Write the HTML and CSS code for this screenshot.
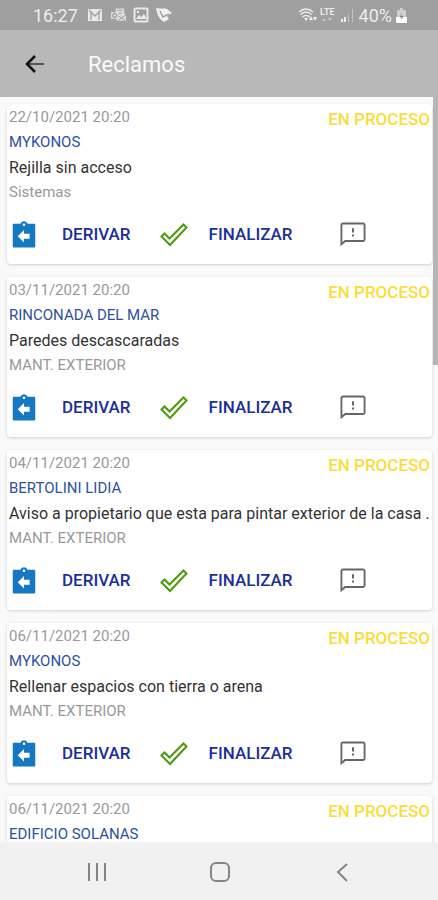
FILE: index.html
```html
<!DOCTYPE html>
<html lang="es">
<head>
<meta charset="utf-8">
<meta name="viewport" content="width=device-width, initial-scale=1">
<title>Reclamos</title>
<link rel="stylesheet" href="styles.css">
</head>
<body>
<svg class="defs" aria-hidden="true">
  <symbol id="i-return" viewBox="0 0 24 24"><path d="M20 3h-5.200C14.400 1.800 13.300 1 12 1s-2.400.800-2.800 2H4c-.600 0-1 .400-1 1v17c0 .600.400 1 1 1h16c.600 0 1-.400 1-1V4c0-.600-.400-1-1-1zm-8-.300c.600 0 1 .400 1 1s-.400 1-1 1-1-.400-1-1 .400-1 1-1zM16.500 15H12v3l-5-5 5-5v3h4.500z"/></symbol>
  <symbol id="i-check" viewBox="0 0 28 24"><path d="M1.500 13.500 4.500 10.500 9.500 15.500 23.500 1.500 26.500 4.500 10 22z" /></symbol>
  <symbol id="i-note" viewBox="0 0 24 24"><path d="M20 2H4c-1.100 0-2 .900-2 2v17l4-3.500h14c1.100 0 2-.900 2-2V4c0-1.100-.900-2-2-2zm.500 14H5.400L3.500 17.700V3.500h17zM11.200 11.500h1.600v1.600h-1.600zm0-5h1.600v3.500h-1.600z"/></symbol>
</svg>

<div class="status">
  <span class="clock">16:27</span>
  <svg class="s-icon" viewBox="0 0 16 16"><path fill="#e9e9e9" d="M1 2h14v12H1z"/><path d="M4 13V5l4 4 4-4v8M2 3l6 6 6-6" fill="none" stroke="#9f9f9f" stroke-width="1.300"/></svg>
  <svg class="s-icon wide" viewBox="0 0 18 16"><path d="M6 1h9v5l2 2v6H7v-2H1V5h5z" fill="#dedede"/><circle cx="5" cy="8.500" r="2" fill="none" stroke="#999" stroke-width="1.300"/><path d="M8 3h5M9 6h4M9 9l3 2 5-3M9 14l3-3 4 3" fill="none" stroke="#999"/></svg>
  <svg class="s-icon" viewBox="0 0 16 16"><rect x="1.500" y="1.500" width="13" height="13" rx="1" fill="none" stroke="#e9e9e9" stroke-width="2"/><path d="m3 12 3-4 2 2 3-3 3 5zM4 4h2v2H4z" fill="#e9e9e9"/></svg>
  <svg class="s-icon last" viewBox="0 0 16 16"><path d="M0 1c4 1 8 0 11 1l5 4-5 3 2 3-5 3C3 12 1 7 0 1z" fill="#f0f0f0"/><path d="m4 4 3 6 6-3" fill="none" stroke="#9f9f9f" stroke-width="1.500"/></svg>
  <svg class="wifi" viewBox="0 0 20 16"><g fill="none" stroke="#efefef" stroke-width="1.500"><path d="M1 5q7-6 14 0M2.500 7.500q5.500-5 11 0M4.500 10q3.500-3 7 0"/></g><path d="m6 11 2 3 2-3zM11 13l2-4 2 4zM15 10h4l-2 4z" fill="#efefef"/></svg>
  <span class="lte">LTE<svg viewBox="0 0 12 5"><path d="m1 4 2-3 2 3zM7 1h4L9 4z" fill="#c8c8c8"/></svg></span>
  <svg class="signal" viewBox="0 0 14 14"><path d="M1 11h2v3H1zM4 9h2v5H4z" fill="#eee"/><path d="M8 6h1v8H8zM12 1h1v13h-1z" fill="#c4c4c4"/></svg>
  <span class="battery-text">40%</span>
  <svg class="battery" viewBox="0 0 11 15"><path d="M4 0h3v2h2q1 0 1 1v10q0 1-1 1H2q-1 0-1-1V3q0-1 1-1h2z" fill="#d0d0d0"/><path d="M0 9h11v5q0 1-1 1H1q-1 0-1-1z" fill="#fff"/><path d="M5.500 5 3.500 9.500h2v2.500l2-4h-2z" fill="#888"/></svg>
</div>

<header class="appbar">
  <button class="back" type="button" aria-label="Volver"><svg viewBox="0 0 20 20"><path d="M2 10h17" stroke="#555" stroke-width="2"/><path d="M10 2 2 10l8 8" fill="none" stroke="#111" stroke-width="2.500"/></svg></button>
  <h1>Reclamos</h1>
</header>

<main class="list">
  <article class="card">
    <div class="top"><time>22/10/2021 20:20</time><strong>EN PROCESO</strong></div>
    <h2>MYKONOS</h2>
    <p class="desc">Rejilla sin acceso</p>
    <p class="area">Sistemas</p>
    <div class="actions">
      <button class="derive" type="button"><svg><use href="#i-return"/></svg>DERIVAR</button>
      <button class="finish" type="button"><svg><use href="#i-check"/></svg>FINALIZAR</button>
      <button class="note" type="button" aria-label="Comentar"><svg><use href="#i-note"/></svg></button>
    </div>
  </article>
  <article class="card">
    <div class="top"><time>03/11/2021 20:20</time><strong>EN PROCESO</strong></div>
    <h2>RINCONADA DEL MAR</h2>
    <p class="desc">Paredes descascaradas</p>
    <p class="area">MANT. EXTERIOR</p>
    <div class="actions">
      <button class="derive" type="button"><svg><use href="#i-return"/></svg>DERIVAR</button>
      <button class="finish" type="button"><svg><use href="#i-check"/></svg>FINALIZAR</button>
      <button class="note" type="button" aria-label="Comentar"><svg><use href="#i-note"/></svg></button>
    </div>
  </article>
  <article class="card">
    <div class="top"><time>04/11/2021 20:20</time><strong>EN PROCESO</strong></div>
    <h2>BERTOLINI LIDIA</h2>
    <p class="desc">Aviso a propietario que esta para pintar exterior de la casa .</p>
    <p class="area">MANT. EXTERIOR</p>
    <div class="actions">
      <button class="derive" type="button"><svg><use href="#i-return"/></svg>DERIVAR</button>
      <button class="finish" type="button"><svg><use href="#i-check"/></svg>FINALIZAR</button>
      <button class="note" type="button" aria-label="Comentar"><svg><use href="#i-note"/></svg></button>
    </div>
  </article>
  <article class="card">
    <div class="top"><time>06/11/2021 20:20</time><strong>EN PROCESO</strong></div>
    <h2>MYKONOS</h2>
    <p class="desc">Rellenar espacios con tierra o arena</p>
    <p class="area">MANT. EXTERIOR</p>
    <div class="actions">
      <button class="derive" type="button"><svg><use href="#i-return"/></svg>DERIVAR</button>
      <button class="finish" type="button"><svg><use href="#i-check"/></svg>FINALIZAR</button>
      <button class="note" type="button" aria-label="Comentar"><svg><use href="#i-note"/></svg></button>
    </div>
  </article>
  <article class="card">
    <div class="top"><time>06/11/2021 20:20</time><strong>EN PROCESO</strong></div>
    <h2>EDIFICIO SOLANAS</h2>
  </article>
  <div class="scrollbar"></div>
</main>

<nav class="navbar">
  <button type="button" aria-label="Recientes"><svg viewBox="0 0 22 22"><path d="M3 2v18M11 2v18M19 2v18" fill="none" stroke="#858585" stroke-width="2"/></svg></button>
  <button type="button" aria-label="Inicio"><svg viewBox="0 0 22 22"><rect x="2" y="2" width="18" height="18" rx="5" fill="none" stroke="#858585" stroke-width="2"/></svg></button>
  <button type="button" aria-label="Atrás"><svg viewBox="0 0 22 22"><path d="M15 3 6 11l9 9" fill="none" stroke="#858585" stroke-width="2"/></svg></button>
</nav>
</body>
</html>
```
FILE: styles.css
```css
* { box-sizing: border-box; }
body {
  margin: 0;
  height: 100vh;
  display: flex;
  flex-direction: column;
  background: #f9f9f9;
  font-family: Roboto, "Liberation Sans", sans-serif;
}
.defs { display: none; }
svg { display: block; flex: none; }
h1, h2, p { margin: 0; font-weight: 400; }
button {
  border: 0;
  padding: 0;
  background: none;
  font: inherit;
  color: inherit;
  display: flex;
  align-items: center;
}

.status {
  flex: none;
  display: flex;
  align-items: center;
  height: 30px;
  padding: 0 31px 0 33px;
  background: #9f9f9f;
  color: #ececec;
}
.clock { font-size: 18px; margin-right: 9px; }
.s-icon { width: 16px; height: 16px; margin-right: 7px; }
.s-icon.wide { width: 17px; margin-right: 6px; }
.s-icon.last { margin-right: auto; }
.wifi { width: 20px; height: 16px; margin-right: 2px; }
.lte {
  display: flex;
  flex-direction: column;
  align-items: center;
  font-size: 9px;
  line-height: 9px;
  font-weight: 700;
}
.lte svg { width: 12px; height: 5px; }
.signal { width: 14px; height: 14px; margin: 0 5px; }
.battery-text { font-size: 18px; }
.battery { width: 11px; height: 15px; margin-left: 4px; }

.appbar {
  flex: none;
  display: flex;
  align-items: center;
  height: 67px;
  padding-left: 25px;
  background: #b8b8b8;
}
.back { margin-right: 43px; }
.back svg { width: 20px; height: 20px; }
.appbar h1 { font-size: 22px; line-height: 26px; color: #fafafa; padding-top: 2px; }

.list {
  position: relative;
  flex: 1;
  min-height: 0;
  overflow: hidden;
  display: flex;
  flex-direction: column;
  gap: 13px;
  padding: 7px 6px 0 7px;
}
.card {
  flex: none;
  min-height: 160px;
  padding: 1px 2px 0;
  background: #fff;
  border-radius: 4px;
  box-shadow: 0 1px 3px #0000002b;
  line-height: 25px;
}
.top { display: flex; justify-content: space-between; font-size: 15px; height: 25px; }
.top time { color: #999; }
.top strong { font-size: 17px; font-weight: 500; line-height: 28px; color: #fbdc3c; }
.card h2 { font-size: 15px; color: #2b51a0; }
.desc {
  font-size: 16px;
  color: #333;
  overflow: hidden;
  white-space: nowrap;
  text-overflow: ellipsis;
}
.area { font-size: 15px; color: #999; }
.actions {
  display: flex;
  align-items: center;
  height: 59px;
  font-size: 17px;
  font-weight: 500;
  color: #1b2f96;
}
.derive { gap: 23px; margin-right: 29px; }
.derive svg { width: 30px; height: 30px; fill: #1478c2; }
.finish { gap: 21px; margin-right: 45px; }
.finish svg { width: 28px; height: 24px; fill: none; stroke: #4a9a0c; stroke-width: 2; }
.note svg { width: 30px; height: 30px; fill: #666; }

.scrollbar {
  position: absolute;
  top: 0;
  right: 0;
  width: 5px;
  height: 268px;
  background: #b5b5b5;
}

.navbar {
  flex: none;
  display: flex;
  justify-content: center;
  gap: 101px;
  height: 58px;
  padding: 2px 0 0 2px;
  background: #f1f1f1;
}
.navbar svg { width: 22px; height: 22px; }
```
